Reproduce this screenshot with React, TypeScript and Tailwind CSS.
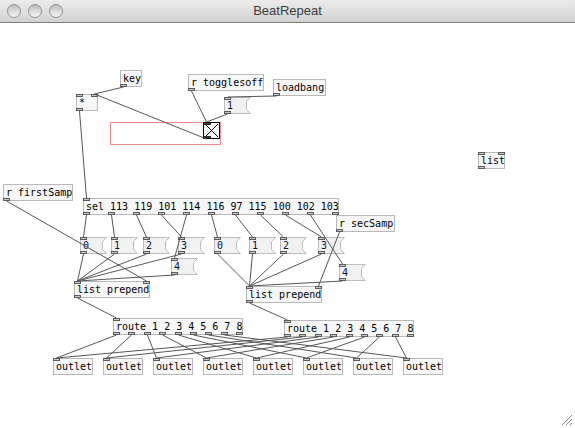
import React from "react";

type Kind = "obj" | "msg" | "tgl";
type PdNode = {
  id: string;
  x: number;
  y: number;
  w: number;
  h?: number;
  text?: string;
  kind: Kind;
  ins: number;
  outs: number;
};

// canvas starts below the title bar
const TOP = 23;
const H = 17;

const msgRow = (suffix: string, xs: number[], y: number, y4: number, x4: number): PdNode[] => [
  ...xs.map((x, i) => ({ id: `m${i}${suffix}`, x, y, w: 27, text: String(i), kind: "msg" as Kind, ins: 1, outs: 1 })),
  { id: `m4${suffix}`, x: x4, y: y4, w: 27, text: "4", kind: "msg", ins: 1, outs: 1 },
];

const nodes: PdNode[] = [
  { id: "key", x: 120, y: 70, w: 22, text: "key", kind: "obj", ins: 0, outs: 1 },
  { id: "mul", x: 76, y: 94, w: 22, text: "*", kind: "obj", ins: 2, outs: 1 },
  { id: "rtog", x: 188, y: 74, w: 76, text: "r togglesoff", kind: "obj", ins: 0, outs: 1 },
  { id: "lb", x: 273, y: 79, w: 53, text: "loadbang", kind: "obj", ins: 0, outs: 1 },
  { id: "one", x: 224, y: 97, w: 27, text: "1", kind: "msg", ins: 1, outs: 1 },
  { id: "tgl", x: 203, y: 122, w: 17, h: 17, kind: "tgl", ins: 1, outs: 1 },
  { id: "list", x: 478, y: 152, w: 27, text: "list", kind: "obj", ins: 2, outs: 1 },
  { id: "rfs", x: 3, y: 184, w: 70, text: "r firstSamp", kind: "obj", ins: 0, outs: 1 },
  { id: "sel", x: 83, y: 198, w: 256, text: "sel 113 119 101 114 116 97 115 100 102 103", kind: "obj", ins: 1, outs: 11 },
  { id: "rss", x: 336, y: 215, w: 59, text: "r secSamp", kind: "obj", ins: 0, outs: 1 },
  ...msgRow("a", [80, 111, 143, 178], 237, 258, 171),
  ...msgRow("b", [214, 249, 280, 318], 237, 264, 339),
  { id: "lp1", x: 74, y: 281, w: 76, text: "list prepend", kind: "obj", ins: 2, outs: 1 },
  { id: "lp2", x: 246, y: 286, w: 76, text: "list prepend", kind: "obj", ins: 2, outs: 1 },
  { id: "rt1", x: 113, y: 318, w: 130, text: "route 1 2 3 4 5 6 7 8", kind: "obj", ins: 1, outs: 9 },
  { id: "rt2", x: 284, y: 320, w: 130, text: "route 1 2 3 4 5 6 7 8", kind: "obj", ins: 1, outs: 9 },
  ...Array.from({ length: 8 }, (_, i) => ({
    id: `o${i}`, x: 53 + 50 * i, y: 358, w: 40, text: "outlet", kind: "obj" as Kind, ins: 1, outs: 0,
  })),
];

const wires: [string, number, string, number][] = [
  ["key", 0, "mul", 1],
  ["tgl", 0, "mul", 1],
  ["rtog", 0, "tgl", 0],
  ["lb", 0, "one", 0],
  ["one", 0, "tgl", 0],
  ["mul", 0, "sel", 0],
  ["sel", 0, "m0a", 0],
  ["sel", 1, "m1a", 0],
  ["sel", 2, "m2a", 0],
  ["sel", 3, "m3a", 0],
  ["sel", 4, "m4a", 0],
  ["sel", 5, "m0b", 0],
  ["sel", 6, "m1b", 0],
  ["sel", 7, "m2b", 0],
  ["sel", 8, "m3b", 0],
  ["sel", 9, "m4b", 0],
  ...[0, 1, 2, 3, 4].map((i) => [`m${i}a`, 0, "lp1", 0] as [string, number, string, number]),
  ...[0, 1, 2, 3, 4].map((i) => [`m${i}b`, 0, "lp2", 0] as [string, number, string, number]),
  ["rfs", 0, "lp1", 1],
  ["rss", 0, "lp2", 1],
  ["lp1", 0, "rt1", 0],
  ["lp2", 0, "rt2", 0],
  ...Array.from({ length: 8 }, (_, i) => ["rt1", i, `o${i}`, 0] as [string, number, string, number]),
  ...Array.from({ length: 8 }, (_, i) => ["rt2", i, `o${i}`, 0] as [string, number, string, number]),
];

const byId = Object.fromEntries(nodes.map((n) => [n.id, n]));

// the message box outline has a notch on its right side, so ports sit on the body width
const bodyW = (n: PdNode) => (n.kind === "msg" ? n.w - 4 : n.w);
const portX = (n: PdNode, i: number, count: number) =>
  count > 1 ? Math.round(((bodyW(n) - 7) * i) / (count - 1)) : 0;

const Port = ({ left, bottom }: { left: number; bottom?: boolean }) => (
  <span
    className={`absolute w-[7px] h-[3px] border border-[#5c5c5c] bg-[#c9c9c9] ${bottom ? "bottom-0" : "top-0"}`}
    style={{ left }}
  />
);

const Ports = ({ n }: { n: PdNode }) => (
  <>
    {Array.from({ length: n.ins }, (_, i) => (
      <Port key={`i${i}`} left={portX(n, i, n.ins)} />
    ))}
    {Array.from({ length: n.outs }, (_, i) => (
      <Port key={`o${i}`} left={portX(n, i, n.outs)} bottom />
    ))}
  </>
);

const Box = ({ n }: { n: PdNode }) => {
  const h = n.h ?? H;
  const pos = { left: n.x, top: n.y - TOP, width: n.w, height: h };

  if (n.kind === "tgl") {
    return (
      <div className="absolute bg-white border border-black" style={pos}>
        <svg className="absolute inset-0" width={15} height={15}>
          <line x1="1" y1="1" x2="14" y2="14" stroke="#000" strokeWidth="1" />
          <line x1="14" y1="1" x2="1" y2="14" stroke="#000" strokeWidth="1" />
        </svg>
        <span className="absolute top-0 left-0 w-[7px] h-[2px] bg-[#333]" />
        <span className="absolute bottom-0 left-0 w-[7px] h-[2px] bg-[#333]" />
      </div>
    );
  }

  if (n.kind === "msg") {
    const w = n.w;
    const c = 4;
    return (
      <div className="absolute" style={pos}>
        <svg className="absolute inset-0" width={w} height={h}>
          <polygon
            points={`0.5,0.5 ${w - 0.5},0.5 ${w - c - 0.5},${c + 0.5} ${w - c - 0.5},${h - c - 0.5} ${w - 0.5},${h - 0.5} 0.5,${h - 0.5}`}
            fill="#f1f1f1"
            stroke="#bdbdbd"
          />
        </svg>
        <span className="relative block pl-[3px] leading-[17px] text-[10px] text-[#12123a] font-['DejaVu_Sans_Mono',monospace]">
          {n.text}
        </span>
        <Ports n={n} />
      </div>
    );
  }

  return (
    <div className="absolute bg-[#f7f7f7] border border-[#b9b9b9]" style={pos}>
      <span className="block pl-[2px] leading-[15px] text-[10px] text-black whitespace-pre font-['DejaVu_Sans_Mono',monospace]">
        {n.text}
      </span>
      <div className="absolute -inset-px">
        <Ports n={n} />
      </div>
    </div>
  );
};

const Light = () => (
  <span className="w-[14px] h-[14px] rounded-full border border-[#939393] bg-linear-to-b from-[#bcbcbc] via-[#dadada] to-[#f5f5f5]" />
);

export default function App() {
  return (
    <div className="w-[575px] h-[428px] flex flex-col bg-white overflow-hidden">
      <div className="relative h-[23px] shrink-0 flex items-center gap-[7px] pl-[7px] bg-linear-to-b from-[#ececec] to-[#d2d2d2] border-b border-[#7f7f7f]">
        <Light />
        <Light />
        <Light />
        <div className="absolute inset-0 flex items-center justify-center text-[13px] text-[#3c3c3c] font-['Lucida_Grande','Liberation_Sans',sans-serif]">
          BeatRepeat
        </div>
      </div>

      <div className="relative flex-1">
        <div
          className="absolute border border-[#f08c8c]"
          style={{ left: 110, top: 122 - TOP, width: 111, height: 23 }}
        />
        {nodes.map((n) => (
          <Box key={n.id} n={n} />
        ))}

        <svg className="absolute inset-0 pointer-events-none" width={575} height={405}>
          <g transform={`translate(0,${-TOP})`} stroke="#575757" strokeWidth="1" fill="none">
            {wires.map(([a, ai, b, bi], k) => {
              const s = byId[a];
              const d = byId[b];
              const x1 = s.x + portX(s, ai, s.outs) + 3.5;
              const y1 = s.y + (s.h ?? H);
              const x2 = d.x + portX(d, bi, d.ins) + 3.5;
              const y2 = d.y;
              return <line key={k} x1={x1} y1={y1} x2={x2} y2={y2} />;
            })}
          </g>
        </svg>

        <svg className="absolute right-[2px] bottom-[2px]" width={12} height={12}>
          <g stroke="#8a8a8a" strokeWidth="1">
            <line x1="11" y1="1" x2="1" y2="11" />
            <line x1="11" y1="5" x2="5" y2="11" />
            <line x1="11" y1="9" x2="9" y2="11" />
          </g>
        </svg>
      </div>
    </div>
  );
}
